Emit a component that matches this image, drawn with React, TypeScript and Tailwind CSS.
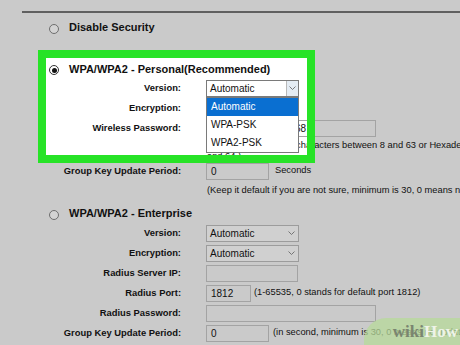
import type { ReactNode } from "react";

const Chevron = () => (
  <svg width="7" height="4" viewBox="0 0 7 4" fill="none">
    <path d="M0.5 0.5 3.5 3.5 6.5 0.5" stroke="#6b6b6b" strokeWidth="0.9" />
  </svg>
);

function Radio({ checked }: { checked?: boolean }) {
  return (
    <span
      className={
        checked
          ? "flex h-[10px] w-[10px] translate-y-[1px] items-center justify-center rounded-full border border-[#333] bg-white"
          : "flex h-[10px] w-[10px] translate-y-[2px] items-center justify-center rounded-full border border-[#6e6e6e] bg-[#d3d3d3]"
      }
    >
      {checked && <span className="h-[5px] w-[5px] rounded-full bg-[#111]" />}
    </span>
  );
}

function Heading({ checked, className, children }: { checked?: boolean; className: string; children: ReactNode }) {
  return (
    <div className={`flex items-center gap-[10px] pl-[27px] ${className}`}>
      <Radio checked={checked} />
      <span className="text-[11px] font-bold text-[#111]">{children}</span>
    </div>
  );
}

function Row({ label, children }: { label: string; children: ReactNode }) {
  return (
    <div className="flex h-[20px] items-center">
      <div className="w-[159px] text-right text-[9.4px] font-bold text-[#111]">{label}</div>
      <div className="ml-[25px] flex items-center">{children}</div>
    </div>
  );
}

function Select({ value, open }: { value: string; open?: boolean }) {
  if (open) {
    return (
      <div className="relative">
        <div className="flex h-[17px] w-[93px] items-center border border-[#7a7a7a] bg-white">
          <span className="flex-1 pl-[3px] text-[10px] text-[#111]">{value}</span>
          <span className="flex h-full w-[12px] items-center justify-center border-l border-[#b9b9b9] bg-[#e4ecf4]">
            <Chevron />
          </span>
        </div>
        <ul className="absolute left-0 top-[17px] w-[93px] border border-[#7a7a7a] bg-white text-[10px] text-[#111]">
          <li className="flex h-[18px] items-center bg-[#0a6fd1] pl-[4px] text-white">Automatic</li>
          <li className="flex h-[18px] items-center pl-[4px]">WPA-PSK</li>
          <li className="flex h-[18px] items-center pl-[4px]">WPA2-PSK</li>
        </ul>
      </div>
    );
  }
  return (
    <div className="flex h-[17px] w-[93px] items-center justify-between border border-[#9c9c9c] bg-[#d0d0d0] pl-[3px] pr-[3px]">
      <span className="text-[10px] text-[#111]">{value}</span>
      <Chevron />
    </div>
  );
}

function Input({ width, value }: { width: string; value?: string }) {
  return (
    <div className={`flex h-[17px] items-center overflow-hidden whitespace-nowrap border border-[#a3a3a3] px-[4px] text-[10px] text-[#111] ${width}`}>
      {value}
    </div>
  );
}

export default function App() {
  return (
    <div className="relative h-[345px] w-[460px] overflow-hidden bg-[#cacaca] font-['Liberation_Sans',Arial,sans-serif] text-[#111]">
      {/* highlight fill behind the personal section */}
      <div className="absolute left-[46px] top-[57px] z-0 h-[99px] w-[261px] bg-white" />

      <div className="relative z-10 w-[620px] pl-[22px] pt-[11px]">
        <div className="h-[2px] bg-[#606060]" />

        <Heading className="mt-[4px] h-[20px]">Disable Security</Heading>

        <Heading checked className="mt-[23px] h-[18px]">
          WPA/WPA2 - Personal(Recommended)
        </Heading>
        <Row label="Version:">
          <Select value="Automatic" open />
        </Row>
        <Row label="Encryption:">
          <Select value="Automatic" />
        </Row>
        <Row label="Wireless Password:">
          <Input width="w-[170px]" value="mypassword1234568" />
        </Row>
        <p className="ml-[185px] mt-[2px] w-[380px] text-[9.3px] leading-[10.5px]">
          (You can enter ASCII characters between 8 and 63 or Hexadecimal characters between 8 and 64.)
        </p>
        <Row label="Group Key Update Period:">
          <Input width="w-[63px]" value="0" />
          <span className="ml-[6px] text-[9.3px]">Seconds</span>
        </Row>
        <p className="ml-[185px] mt-[4px] whitespace-nowrap text-[9.3px] leading-[11px]">
          (Keep it default if you are not sure, minimum is 30, 0 means no update)
        </p>

        <Heading className="mt-[8px] h-[18px]">WPA/WPA2 - Enterprise</Heading>
        <div className="mt-[1px]">
          <Row label="Version:">
            <Select value="Automatic" />
          </Row>
          <Row label="Encryption:">
            <Select value="Automatic" />
          </Row>
          <Row label="Radius Server IP:">
            <Input width="w-[92px]" />
          </Row>
          <Row label="Radius Port:">
            <Input width="w-[45px]" value="1812" />
            <span className="ml-[3px] whitespace-nowrap text-[9.3px]">(1-65535, 0 stands for default port 1812)</span>
          </Row>
          <Row label="Radius Password:">
            <Input width="w-[170px]" />
          </Row>
          <Row label="Group Key Update Period:">
            <Input width="w-[63px]" value="0" />
            <span className="ml-[4px] whitespace-nowrap text-[9.3px]">(in second, minimum is 30, 0 means no update)</span>
          </Row>
        </div>
      </div>

      {/* green annotation frame */}
      <div className="pointer-events-none absolute left-[38px] top-[50px] z-20 h-[113px] w-[277px] border-[8px] border-[#27e327]" />

      {/* watermark */}
      <div className="absolute bottom-0 right-0 z-30 flex h-[27px] w-[96px] items-center justify-end rounded-tl-[22px] bg-[#b7da9a]/75 pr-[2px]">
        <span className="font-['Liberation_Serif',serif] text-[17px] font-bold leading-none">
          <span className="text-[#7a8570]">wiki</span>
          <span className="text-[#eef3e8]">How</span>
        </span>
      </div>
    </div>
  );
}
